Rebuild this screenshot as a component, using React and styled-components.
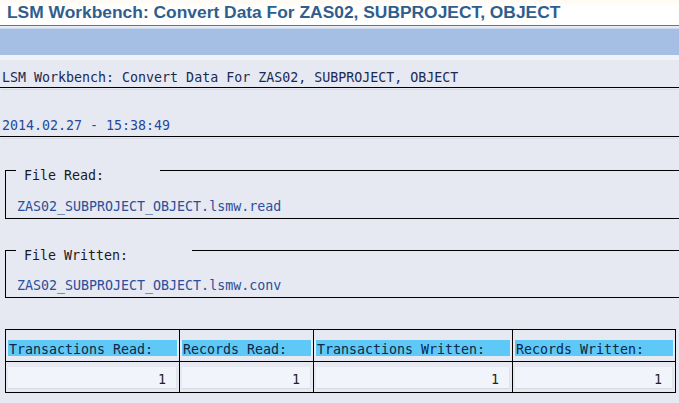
import React from "react";
import styled, { createGlobalStyle } from "styled-components";

const Global = createGlobalStyle`
  html, body { margin: 0; padding: 0; background: #e6e9f2; }
  body { width: 679px; height: 403px; overflow: hidden; }
`;

const mono = `"DejaVu Sans Mono", "Liberation Mono", monospace`;

const Page = styled.div`
  display: flex;
  flex-direction: column;
  width: 679px;
  height: 403px;
  background: #e6e9f2;
  overflow: hidden;
`;

const TitleBar = styled.div`
  height: 26px;
  box-sizing: border-box;
  padding-left: 7px;
  background: linear-gradient(#fffaf2, #ffffff 30%);
  border-bottom: 1px solid #5f7896;
  display: flex;
  align-items: center;
  font-family: "Liberation Sans", Arial, sans-serif;
  font-weight: bold;
  font-size: 17.4px;
  color: #2f5e8c;
  white-space: nowrap;
`;

const Toolbar = styled.div`
  margin-top: 2px;
  height: 27px;
  background: #a4bfe3;
  border-top: 1px solid #c9d8ec;
  box-sizing: border-box;
`;

const Strip = styled.div`
  height: 5px;
  background: #f0f2f7;
`;

const Line = styled.div`
  height: ${(p) => p.$h}px;
  box-sizing: border-box;
  border-bottom: 1px solid #000;
  box-shadow: 0 2px 0 -1px #e6e9f2, 0 3px 0 -1px #d7dce7;
  padding: ${(p) => p.$pt}px 0 0 2px;
  font-family: ${mono};
  font-size: 13.3px;
  line-height: 16px;
  color: ${(p) => p.$color};
  white-space: nowrap;
`;

const Group = styled.fieldset`
  margin: ${(p) => p.$mt}px 0 0 5px;
  padding: 0 0 0 10px;
  border: 1px solid #000;
  border-right: none;
  height: ${(p) => p.$h}px;
  box-sizing: border-box;
  min-width: 0;
`;

const Legend = styled.legend`
  width: ${(p) => p.$w}px;
  box-sizing: border-box;
  padding: 12px 0 0 8px;
  font-family: ${mono};
  font-size: 13.3px;
  color: #1a1a1a;
  line-height: 16px;
`;

const FileName = styled.div`
  margin-top: ${(p) => p.$mt}px;
  margin-left: 1px;
  font-family: ${mono};
  font-size: 13.3px;
  line-height: 16px;
  color: #2b4f9a;
  white-space: nowrap;
`;

const Table = styled.div`
  margin: 31px 0 0 5px;
  display: grid;
  grid-template-columns: 174px 134px 199px 163px;
  border-top: 1px solid #000;
  border-left: 1px solid #000;
  width: max-content;
`;

const Cell = styled.div`
  box-sizing: border-box;
  border-right: 1px solid #000;
  border-bottom: 1px solid #000;
  height: ${(p) => p.$h}px;
  padding: ${(p) => p.$pt}px 2px 0 2px;
`;

const HeadLabel = styled.div`
  height: 16px;
  background: #5ec9f6;
  padding-left: 1px;
  font-family: ${mono};
  font-size: 13.3px;
  line-height: 19px;
  color: #0e2748;
  white-space: nowrap;
  overflow: hidden;
`;

const Value = styled.div`
  height: 22px;
  box-sizing: border-box;
  background: #f1f5fb;
  border-right: 1px solid #dfe3ea;
  border-bottom: 1px solid #d4d9e2;
  text-align: right;
  padding-right: 10px;
  font-family: ${mono};
  font-size: 13.3px;
  line-height: 25px;
  color: #222;
  overflow: hidden;
`;

const heads = [
  "Transactions Read:",
  "Records Read:",
  "Transactions Written:",
  "Records Written:",
];

export default function App() {
  return (
    <Page>
      <Global />
      <TitleBar>LSM Workbench: Convert Data For ZAS02, SUBPROJECT, OBJECT</TitleBar>
      <Toolbar />
      <Strip />
      <Line $h={28} $pt={10} $color="#1c2a52">
        LSM Workbench: Convert Data For ZAS02, SUBPROJECT, OBJECT
      </Line>
      <Line $h={49} $pt={30} $color="#27499a">
        2014.02.27 - 15:38:49
      </Line>
      <Group $mt={19} $h={63}>
        <Legend $w={144}>File Read:</Legend>
        <FileName $mt={15}>ZAS02_SUBPROJECT_OBJECT.lsmw.read</FileName>
      </Group>
      <Group $mt={17} $h={62}>
        <Legend $w={176}>File Written:</Legend>
        <FileName $mt={14}>ZAS02_SUBPROJECT_OBJECT.lsmw.conv</FileName>
      </Group>
      <Table>
        {heads.map((h) => (
          <Cell key={h} $h={32} $pt={10}>
            <HeadLabel>{h}</HeadLabel>
          </Cell>
        ))}
        {heads.map((h) => (
          <Cell key={h + "v"} $h={31} $pt={5}>
            <Value>1</Value>
          </Cell>
        ))}
      </Table>
    </Page>
  );
}
